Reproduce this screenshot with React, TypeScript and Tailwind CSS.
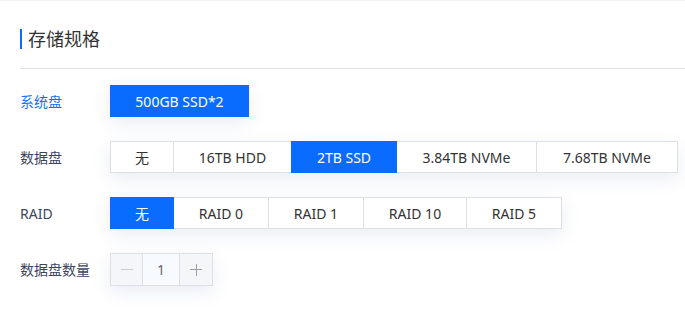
import React from "react";

const font = { fontFamily: '"Noto Sans", "Noto Sans CJK SC", sans-serif' };

type Opt = { label: string; w: string };

function Group({ options, selected }: { options: Opt[]; selected: number }) {
  return (
    <div className="flex shadow-[0_6px_18px_rgba(90,110,170,0.12)]">
      {options.map((o, i) => (
        <div
          key={o.label}
          className={
            (i > 0 ? "-ml-px " : "") +
            o.w +
            " h-[32px] flex items-center justify-center text-[14px] border " +
            (i === selected
              ? "bg-[#0a6cff] border-[#0a6cff] text-white relative z-10"
              : "bg-white border-[#dcdfe6] text-[#333]")
          }
        >
          {o.label}
        </div>
      ))}
    </div>
  );
}

function Row({ label, blue, children }: { label: string; blue?: boolean; children: React.ReactNode }) {
  return (
    <div className="flex items-center">
      <div className={"w-[90px] text-[14px] " + (blue ? "text-[#1a6fe8]" : "text-[#3d4560]")}>{label}</div>
      {children}
    </div>
  );
}

export default function App() {
  return (
    <div className="w-[685px] h-[310px] bg-white border-t border-[#f2f2f2] overflow-hidden" style={font}>
      <div className="pl-[20px]">
        <div className="mt-[28px] pb-[19px] border-b border-[#e2e2e2]">
          <div className="flex items-center h-[20px]">
            <div className="w-[2px] h-[20px] bg-[#0a6cff]"></div>
            <div className="ml-[6px] text-[18px] leading-[20px] text-[#333]">存储规格</div>
          </div>
        </div>
        <div className="mt-[16px] flex flex-col gap-[24px]">
          <Row label="系统盘" blue>
            <div className="flex shadow-[0_6px_18px_rgba(90,110,170,0.12)]">
              <div className="w-[139px] h-[32px] bg-[#0a6cff] text-white text-[14px] flex items-center justify-center">
                500GB SSD*2
              </div>
            </div>
          </Row>
          <Row label="数据盘">
            <Group
              selected={2}
              options={[
                { label: "无", w: "w-[64px]" },
                { label: "16TB HDD", w: "w-[119px]" },
                { label: "2TB SSD", w: "w-[106px]" },
                { label: "3.84TB NVMe", w: "w-[141px]" },
                { label: "7.68TB NVMe", w: "w-[142px]" },
              ]}
            />
          </Row>
          <Row label="RAID">
            <Group
              selected={0}
              options={[
                { label: "无", w: "w-[64px]" },
                { label: "RAID 0", w: "w-[96px]" },
                { label: "RAID 1", w: "w-[96px]" },
                { label: "RAID 10", w: "w-[104px]" },
                { label: "RAID 5", w: "w-[96px]" },
              ]}
            />
          </Row>
          <Row label="数据盘数量">
            <div className="flex h-[33px] shadow-[0_6px_18px_rgba(90,110,170,0.12)]">
              <div className="w-[33px] border border-[#dcdfe6] bg-[#f5f6fa] flex items-center justify-center">
                <div className="w-[12px] h-px bg-[#c8ccd4]"></div>
              </div>
              <div className="-ml-px w-[38px] border border-[#dcdfe6] bg-[#f7fbff] flex items-center justify-center text-[14px] text-[#666]">
                1
              </div>
              <div className="-ml-px w-[34px] border border-[#dcdfe6] bg-[#f5f6fa] flex items-center justify-center relative">
                <div className="w-[12px] h-px bg-[#9a9ea8]"></div>
                <div className="absolute w-px h-[12px] bg-[#9a9ea8]"></div>
              </div>
            </div>
          </Row>
        </div>
      </div>
    </div>
  );
}
